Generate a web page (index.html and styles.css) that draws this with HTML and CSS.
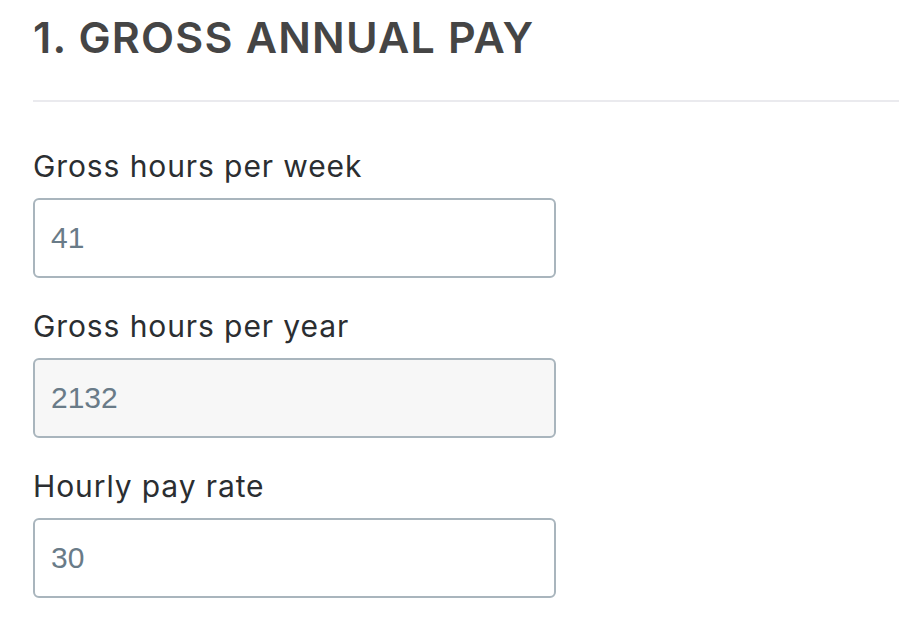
FILE: index.html
```html
<!DOCTYPE html>
<html lang="en">
<head>
    <meta charset="UTF-8">
    <meta name="viewport" content="width=device-width, initial-scale=1.0">
    <title>Gross Annual Pay</title>
    <link rel="stylesheet" href="styles.css">
</head>
<body>
    <section class="calc-section">
        <h2 class="section-title">1. GROSS ANNUAL PAY</h2>
        <hr class="divider">

        <div class="field">
            <label class="field-label" for="hoursWeek">Gross hours per week</label>
            <input class="field-input" type="text" id="hoursWeek" value="41">
        </div>

        <div class="field">
            <label class="field-label" for="hoursYear">Gross hours per year</label>
            <input class="field-input readonly" type="text" id="hoursYear" value="2132" readonly>
        </div>

        <div class="field">
            <label class="field-label" for="payRate">Hourly pay rate</label>
            <input class="field-input" type="text" id="payRate" value="30">
        </div>
    </section>
</body>
</html>
```

FILE: styles.css
```css
body {
    font-family: Inter, "Liberation Sans", Arial, sans-serif;
    margin: 0;
    background-color: #fff;
}

.calc-section {
    padding: 11px 25px 0 33px;
}

.section-title {
    font-family: Inter, "Liberation Sans", sans-serif;
    font-size: 43px;
    font-weight: 600;
    line-height: 52px;
    letter-spacing: 1.2px;
    color: #454545;
    margin: 0;
}

.divider {
    border: none;
    border-top: 2px solid #eaeaee;
    margin: 37px 0 46px 0;
}

.field {
    display: flex;
    flex-direction: column;
    margin-bottom: 30px;
}

.field-label {
    font-size: 30px;
    line-height: 36px;
    letter-spacing: 0.9px;
    color: #2b2e31;
    margin-bottom: 14px;
}

.field-input {
    box-sizing: border-box;
    width: 523px;
    height: 80px;
    border: 2px solid #a9b5bd;
    border-radius: 6px;
    padding: 0 16px;
    font-family: "Liberation Sans", Arial, sans-serif;
    font-size: 30px;
    color: #697b88;
    background-color: #fff;
    outline: none;
}

.field-input.readonly {
    background-color: #f7f7f7;
}
```
